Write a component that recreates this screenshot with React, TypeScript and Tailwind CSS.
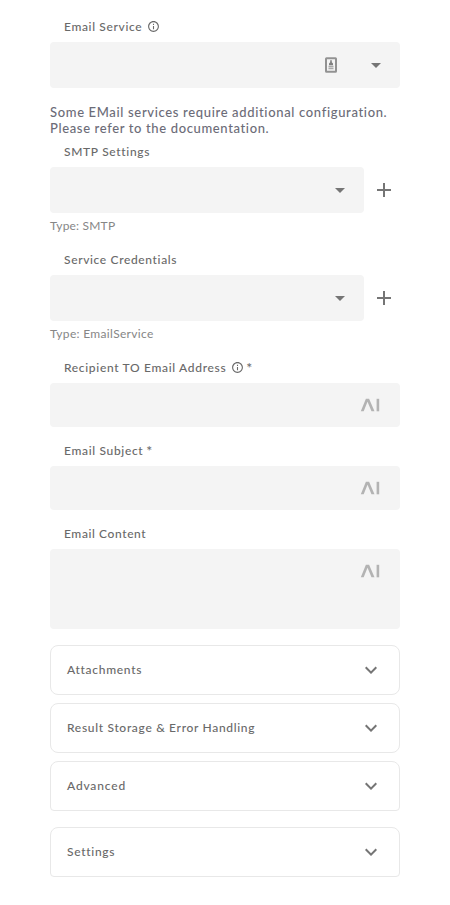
import type { ReactNode } from "react";
import { MdAdd, MdArrowDropDown, MdExpandMore, MdInfoOutline } from "react-icons/md";

function Label({ text, track, info, required }: { text: string; track: string; info?: boolean; required?: boolean }) {
  return (
    <div className="flex h-4 items-start pl-3.5 text-xs font-medium leading-[15px] text-[#696969]">
      <span className={track}>{text}</span>
      {info && <MdInfoOutline className="-mr-px ml-[5px] mt-px size-[13px]" />}
      {required && <span className="ml-[3px] text-sm leading-[15px]">*</span>}
    </div>
  );
}

function AiIcon() {
  return (
    <svg className="h-3.5 w-5 fill-[#b3b3b3]" viewBox="0 0 20 14">
      <path d="M0.8 13.3 5.9 0.8h3.2l5.4 12.5h-3L7.5 3.8 3.7 13.3z" />
      <path d="M16.6 0.8h2.6v12.5h-2.6z" />
    </svg>
  );
}

function AutofillIcon() {
  return (
    <svg className="h-4 w-3" viewBox="0 0 12 16">
      <rect x="1" y="1.2" width="10" height="13.6" rx="0.5" fill="none" stroke="#929292" strokeWidth="2" />
      <path d="M5.2 3.2h1.6v2.1l1.2 1.2v1.7H4V6.5l1.2-1.2z" fill="#808080" />
      <path d="M3.5 9.5h5M3.5 11.5h5" stroke="#aaa" strokeWidth="1.5" />
    </svg>
  );
}

function Picker({ children }: { children?: ReactNode }) {
  return (
    <div className="flex h-[46px] flex-1 items-center justify-end rounded bg-[#f4f4f4] pr-3">
      {children}
      <MdArrowDropDown className="size-6 text-[#757575]" />
    </div>
  );
}

function ResourceField({ label, track, hint, hintTrack }: { label: string; track: string; hint: string; hintTrack: string }) {
  return (
    <section className="flex flex-col">
      <Label text={label} track={track} />
      <div className="mt-[7px] flex items-center">
        <Picker />
        <button className="flex w-9 justify-center pl-1">
          <MdAdd className="size-6 text-[#757575]" />
        </button>
      </div>
      <div className="mt-[5px] h-4 text-xs leading-4 text-[#868686]">
        <span className={hintTrack}>{hint}</span>
      </div>
    </section>
  );
}

function Panel({ title, track, shape }: { title: string; track: string; shape: string }) {
  return (
    <button className={`flex h-[50px] w-full items-center justify-between border border-[#e8e8e8] pl-4 pr-4 text-xs font-medium text-[#696969] ${shape}`}>
      <span className={track}>{title}</span>
      <MdExpandMore className="size-6 text-[#757575]" />
    </button>
  );
}

export default function App() {
  return (
    <main className="flex h-[905px] w-[450px] flex-col bg-white px-[50px] pt-[19px] font-['Lato',sans-serif]">
      <Label text="Email Service" track="tracking-[0.64px]" info />
      <div className="mt-[7px] flex">
        <Picker>
          <span className="mr-[27px]"><AutofillIcon /></span>
        </Picker>
      </div>
      <p className="mt-4 whitespace-nowrap text-[13px] font-medium leading-4 text-[#6c6c78]">
        <span className="tracking-[0.655px]">Some EMail services require additional configuration.</span>
        <br />
        <span className="tracking-[0.635px]">Please refer to the documentation.</span>
      </p>
      <div className="mt-2 flex flex-col gap-[18px]">
        <ResourceField label="SMTP Settings" track="tracking-[0.67px]" hint="Type: SMTP" hintTrack="tracking-[0.2px]" />
        <ResourceField label="Service Credentials" track="tracking-[0.64px]" hint="Type: EmailService" hintTrack="tracking-[0.32px]" />
      </div>
      <div className="mt-[18px] flex flex-col gap-4">
        <section>
          <Label text="Recipient TO Email Address" track="tracking-[0.67px]" info required />
          <div className="mt-[7px] flex h-11 items-center justify-end rounded bg-[#f4f4f4] pr-5"><AiIcon /></div>
        </section>
        <section>
          <Label text="Email Subject" track="tracking-[0.66px]" required />
          <div className="mt-[7px] flex h-11 items-center justify-end rounded bg-[#f4f4f4] pr-5"><AiIcon /></div>
        </section>
        <section>
          <Label text="Email Content" track="tracking-[0.6px]" />
          <div className="mt-[7px] flex h-20 items-start justify-end rounded bg-[#f4f4f4] pr-5 pt-[15px]"><AiIcon /></div>
        </section>
      </div>
      <div className="mt-4 flex flex-col gap-2">
        <Panel title="Attachments" track="tracking-[0.7px]" shape="rounded-lg" />
        <Panel title="Result Storage & Error Handling" track="tracking-[0.68px]" shape="rounded-lg" />
        <Panel title="Advanced" track="tracking-[0.83px]" shape="rounded-t-lg rounded-b" />
      </div>
      <div className="mt-4">
        <Panel title="Settings" track="tracking-[0.7px]" shape="rounded-t-lg rounded-b" />
      </div>
    </main>
  );
}
